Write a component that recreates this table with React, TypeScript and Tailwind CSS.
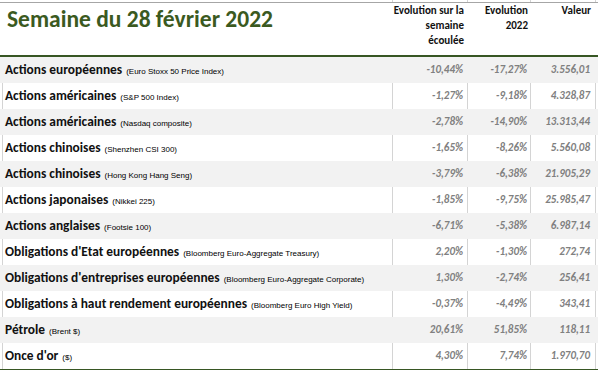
import React from 'react'

const rows: [string, string, string, string, string][] = [
  ['Actions européennes', '(Euro Stoxx 50 Price Index)', '-10,44%', '-17,27%', '3.556,01'],
  ['Actions américaines', '(S&P 500 Index)', '-1,27%', '-9,18%', '4.328,87'],
  ['Actions américaines', '(Nasdaq composite)', '-2,78%', '-14,90%', '13.313,44'],
  ['Actions chinoises', '(Shenzhen CSI 300)', '-1,65%', '-8,26%', '5.560,08'],
  ['Actions chinoises', '(Hong Kong Hang Seng)', '-3,79%', '-6,38%', '21.905,29'],
  ['Actions japonaises', '(Nikkei 225)', '-1,85%', '-9,75%', '25.985,47'],
  ['Actions anglaises', '(Footsie 100)', '-6,71%', '-5,38%', '6.987,14'],
  ["Obligations d'Etat européennes", '(Bloomberg Euro-Aggregate Treasury)', '2,20%', '-1,30%', '272,74'],
  ["Obligations d'entreprises européennes", '(Bloomberg Euro-Aggregate Corporate)', '1,30%', '-2,74%', '256,41'],
  ['Obligations à haut rendement européennes', '(Bloomberg Euro High Yield)', '-0,37%', '-4,49%', '343,41'],
  ['Pétrole', '(Brent $)', '20,61%', '51,85%', '118,11'],
  ["Once d'or", '($)', '4,30%', '7,74%', '1.970,70'],
]

const font = "font-['Carlito','Lato',sans-serif]"

export default function App() {
  return (
    <div className={`w-[598px] h-[370px] bg-white overflow-hidden ${font} text-[#111]`}>
      {/* grid stubs above the header */}
      <div className="flex h-[2px]">
        <div className="w-[2px]" />
        <div className="w-[391px] border-r border-[#d4d4d4]" />
        <div className="w-[75px] border-r border-[#d4d4d4]" />
        <div className="w-[63px] border-r border-[#d4d4d4]" />
        <div className="w-[65px] border-r border-[#d4d4d4]" />
      </div>

      {/* header */}
      <div className="flex h-[55px] border-t border-[#a6a6a6] border-b-2 border-b-[#375623]">
        <div className="w-[393px] pl-[7px] pt-[5px]">
          <h1 className="text-[23.5px] leading-[22px] font-bold text-[#3b5a1f]">Semaine du 28 février 2022</h1>
        </div>
        <div className="w-[75px] pr-[4px] text-right text-[11px] leading-[15px] font-bold">
          Evolution sur la
          <br />
          semaine
          <br />
          écoulée
        </div>
        <div className="w-[63px] pr-[3px] text-right text-[11px] leading-[15px] font-bold">
          Evolution
          <br />
          2022
        </div>
        <div className="w-[65px] pr-[5px] text-right text-[11px] leading-[15px] font-bold">Valeur</div>
      </div>

      {/* rows */}
      {rows.map(([label, sub, week, year, value], i) => {
        const gray = i % 2 === 0
        const line = gray ? 'border-[#f2f2f2]' : 'border-[#d4d4d4]'
        return (
          <div key={i} className={`flex h-[26px] items-stretch ${gray ? 'bg-[#f2f2f2]' : 'bg-white'}`}>
            <div className="w-[2px]" />
            <div className={`w-[391px] border-x ${line} flex items-baseline pt-[6px] pl-[2px] whitespace-nowrap`}>
              <span className="text-[13.4px] leading-[14px] font-bold">{label}</span>
              <span className="ml-[4px] text-[8px] font-['Liberation_Sans',sans-serif] text-black">{sub}</span>
            </div>
            {[week, year, value].map((v, j) => (
              <div
                key={j}
                className={`${j === 0 ? 'w-[75px] pr-[4px]' : j === 1 ? 'w-[63px] pr-[3px]' : 'w-[65px] pr-[5px]'} border-r ${line} flex items-center justify-end text-[11px] font-bold italic text-[#808080]`}
              >
                {v}
              </div>
            ))}
          </div>
        )
      })}
      <div className="h-px bg-[#375623]" />
    </div>
  )
}
